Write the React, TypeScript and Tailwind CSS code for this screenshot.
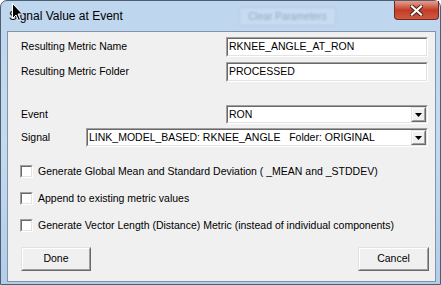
import type { ReactNode } from 'react';

const Sunken = ({ className = '', children }: { className?: string; children?: ReactNode }) => (
  <div className={`border border-t-[#a0a0a0] border-l-[#a0a0a0] border-r-white border-b-white ${className}`}>
    <div className="h-full w-full border border-t-[#696969] border-l-[#696969] border-r-[#e3e3e3] border-b-[#e3e3e3] bg-white flex items-center">
      {children}
    </div>
  </div>
);

const Raised = ({ className = '', children }: { className?: string; children?: ReactNode }) => (
  <div className={`border border-t-[#e3e3e3] border-l-[#e3e3e3] border-r-[#696969] border-b-[#696969] ${className}`}>
    <div className="h-full w-full border border-t-white border-l-white border-r-[#a0a0a0] border-b-[#a0a0a0] bg-[#f0f0f0] flex items-center justify-center">
      {children}
    </div>
  </div>
);

const Combo = ({ value, className = '' }: { value: string; className?: string }) => (
  <Sunken className={`h-[19px] ${className}`}>
    <span className="flex-1 pl-[1px] whitespace-pre leading-none">{value}</span>
    <Raised className="h-full w-[15px]">
      <svg width="7" height="4" viewBox="0 0 7 4">
        <path d="M0 0H7L3.5 4Z" fill="#000" />
      </svg>
    </Raised>
  </Sunken>
);

const Check = ({ label }: { label: string }) => (
  <div className="flex items-center h-[14px] -ml-px">
    <Sunken className="w-[13px] h-[13px]" />
    <span className="ml-[5px] leading-none">{label}</span>
  </div>
);

export default function App() {
  return (
    <div className="relative w-[441px] h-[285px] overflow-hidden bg-white font-['Liberation_Sans',Arial,sans-serif] text-[10.5px] text-black">
      <div className="h-full flex flex-col rounded-t-[7px] border border-[#4f5e6e] bg-gradient-to-b from-[#bed6ee] via-[#c4daf0] to-[#b2cdea]">
        {/* title bar */}
        <div className="relative h-[30px] flex items-start shrink-0">
          <span className="pl-[8px] pt-[6px] text-[12px] text-black">Signal Value at Event</span>
          <div className="absolute left-[238px] top-[6px] w-[97px] h-[19px] rounded-[2px] border border-[#a9bccf] bg-[#d0e2f3] opacity-50 blur-[0.8px] flex items-center justify-center text-[10px] text-[#6d7f92]">
            Clear Parameters
          </div>
          <div className="ml-auto mr-[1px] w-[45px] h-[19px] rounded-b-[4px] border border-t-0 border-[#6b2a20] bg-gradient-to-b from-[#e59e8e] via-[#c23b25] to-[#d2583f] flex items-center justify-center">
            <svg width="13" height="11" viewBox="0 0 13 11">
              <path d="M2 1.5L11 9.5M11 1.5L2 9.5" stroke="#4a1a12" strokeWidth="4" strokeLinecap="square" />
              <path d="M2 1.5L11 9.5M11 1.5L2 9.5" stroke="#ffffff" strokeWidth="2.2" strokeLinecap="square" />
            </svg>
          </div>
        </div>

        {/* client area */}
        <div className="flex-1 ml-[6px] mr-[4px] mb-[2px] border border-[#8193a6] bg-[#f0f0f0] pl-[13px] pr-[7px] flex flex-col">
          <div className="mt-[5px] flex items-center justify-between">
            <span>Resulting Metric Name</span>
            <Sunken className="w-[202px] h-[20px]">
              <span className="pl-[1px]">RKNEE_ANGLE_AT_RON</span>
            </Sunken>
          </div>
          <div className="mt-[5px] flex items-center justify-between">
            <span>Resulting Metric Folder</span>
            <Sunken className="w-[202px] h-[20px]">
              <span className="pl-[1px]">PROCESSED</span>
            </Sunken>
          </div>

          <div className="mt-[23px] flex items-center justify-between">
            <span>Event</span>
            <Combo value="RON" className="w-[202px]" />
          </div>
          <div className="mt-[4px] flex items-center">
            <span className="w-[65px]">Signal</span>
            <Combo value="LINK_MODEL_BASED: RKNEE_ANGLE   Folder: ORIGINAL" className="flex-1" />
          </div>

          <div className="mt-[17px]">
            <Check label="Generate Global Mean and Standard Deviation ( _MEAN and _STDDEV)" />
          </div>
          <div className="mt-[13px]">
            <Check label="Append to existing metric values" />
          </div>
          <div className="mt-[13px]">
            <Check label="Generate Vector Length (Distance) Metric (instead of individual components)" />
          </div>

          <div className="mt-[15px] flex justify-between">
            <Raised className="w-[70px] h-[24px]">Done</Raised>
            <Raised className="w-[71px] h-[24px] -mr-px">Cancel</Raised>
          </div>
        </div>
      </div>

      {/* mouse pointer */}
      <svg className="absolute left-[12px] top-[3px]" width="12" height="19" viewBox="0 0 12 19">
        <path d="M0.5 0.5V15.5L4 12L6.5 17.5L8.5 16.5L6 11H10.5Z" fill="#000" stroke="#fff" strokeWidth="1" />
      </svg>
    </div>
  );
}
